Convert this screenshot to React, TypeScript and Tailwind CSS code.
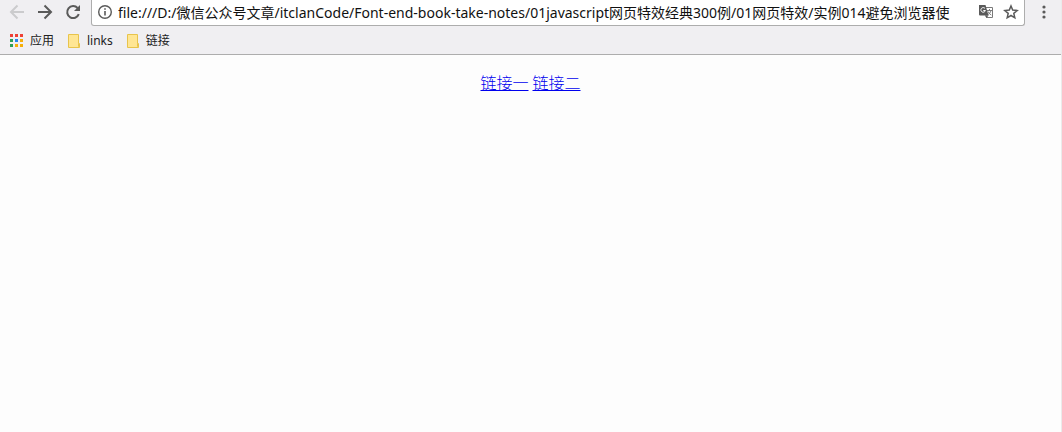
import React from "react";

const PAGE_URL =
  "file:///D:/微信公众号文章/itclanCode/Font-end-book-take-notes/01javascript网页特效经典300例/01网页特效/实例014避免浏览器使";

const BackIcon = () => (
  <svg className="size-4" viewBox="0 0 16 16" fill="none" stroke="#cbcbcd" strokeWidth="2" aria-hidden="true">
    <path d="M15 8H2.5M8.5 1.5 2 8l6.5 6.5" />
  </svg>
);

const ForwardIcon = () => (
  <svg className="size-4" viewBox="0 0 16 16" fill="none" stroke="#5a5a5a" strokeWidth="2" aria-hidden="true">
    <path d="M1 8h12.5M7.5 1.5 14 8l-6.5 6.5" />
  </svg>
);

const ReloadIcon = () => (
  <svg className="size-4" viewBox="0 0 16 16" aria-hidden="true">
    <path d="M13.8 10.2A6 6 0 1 1 12.6 4" fill="none" stroke="#5a5a5a" strokeWidth="2" />
    <path d="M15 1v6H9z" fill="#5a5a5a" />
  </svg>
);

const InfoIcon = () => (
  <svg className="size-4" viewBox="0 0 16 16" fill="none" stroke="#5a5a5a" aria-hidden="true">
    <circle cx="8" cy="8" r="6.3" strokeWidth="1.4" />
    <path d="M8 7v4.5M8 4.2v1.6" strokeWidth="1.6" />
  </svg>
);

const TranslateIcon = () => (
  <svg className="size-4" viewBox="0 0 16 16" aria-hidden="true">
    <path d="M6 3.5h8.5v10H8.5z" fill="#fff" stroke="#7a7a7a" />
    <path d="M9 6.5h5M11.5 5v1.5M13 6.5c-.5 2-1.8 3.4-3.5 4.5M10 7.5c.7 1.5 1.8 2.7 3.3 3.5" fill="none" stroke="#7a7a7a" />
    <path d="M1 1h6.5l3 10.5H2a1 1 0 0 1-1-1z" fill="#5a5a5a" />
    <path d="M7 4.5A2.3 2.3 0 1 0 7.4 6.5H5.3" fill="none" stroke="#fff" />
    <path d="M7 11.5h3.5L8.5 14z" fill="#5a5a5a" />
  </svg>
);

const StarIcon = () => (
  <svg className="size-4" viewBox="0 0 16 16" fill="none" stroke="#5a5a5a" strokeWidth="1.5" aria-hidden="true">
    <path d="m8 2 1.7 4.1 4.5.4-3.4 2.9 1 4.4L8 11.5l-3.8 2.3 1-4.4L1.8 6.5l4.5-.4z" />
  </svg>
);

const MenuIcon = () => (
  <svg className="size-4" viewBox="0 0 16 16" fill="#5a5a5a" aria-hidden="true">
    <circle cx="8" cy="3" r="1.6" />
    <circle cx="8" cy="8" r="1.6" />
    <circle cx="8" cy="13" r="1.6" />
  </svg>
);

const AppsIcon = () => (
  <svg className="size-3.5" viewBox="0 0 14 14" aria-hidden="true">
    <path d="M0 0h3v3H0zM5 0h3v3H5zM10 0h3v3h-3z" fill="#ee4035" />
    <path d="M0 5h3v3H0zM0 10h3v3H0z" fill="#2c9f58" />
    <path d="M5 5h3v3H5z" fill="#2586f0" />
    <path d="M10 5h3v3h-3zM5 10h3v3H5zM10 10h3v3h-3z" fill="#f5ae08" />
  </svg>
);

const FolderIcon = () => (
  <svg className="h-3.5 w-3" viewBox="0 0 12 14" aria-hidden="true">
    <path d="M.5.5h10v9h1v4H.5z" fill="#ffe694" stroke="#e8c44c" />
    <path d="M10.5 9.5v3l-1 1" fill="none" stroke="#e8c44c" />
  </svg>
);

function Bookmark({ label }: { label: string }) {
  return (
    <a href="#" className="flex items-center gap-[7px]">
      <FolderIcon />
      {label}
    </a>
  );
}

export default function App() {
  return (
    <div className="min-h-screen border-r border-[#ebebeb] bg-[#fdfdfd] font-['Noto_Sans','Noto_Sans_CJK_SC',sans-serif]">
      <header className="border-b border-[#adadad] bg-[#f0eff2]">
        <div className="flex h-[26px] items-start px-[9px]">
          <nav className="flex h-6 shrink-0 items-center gap-3">
            <button type="button" disabled aria-label="后退"><BackIcon /></button>
            <button type="button" aria-label="前进"><ForwardIcon /></button>
            <button type="button" aria-label="重新加载"><ReloadIcon /></button>
          </nav>
          <div className="ml-[10px] flex h-full min-w-0 flex-1 items-start rounded-b-[3px] border border-t-0 border-[#adadad] bg-white px-[5px]">
            <div className="flex h-6 min-w-0 flex-1 items-center">
              <button type="button" aria-label="网站信息"><InfoIcon /></button>
              <input
                type="text"
                aria-label="地址"
                defaultValue={PAGE_URL}
                className="ml-[5px] h-6 min-w-0 flex-1 bg-transparent text-sm text-[#111111] outline-none"
              />
              <div className="ml-1 flex shrink-0 gap-[9px]">
                <button type="button" aria-label="翻译"><TranslateIcon /></button>
                <button type="button" aria-label="收藏"><StarIcon /></button>
              </div>
            </div>
          </div>
          <button type="button" aria-label="菜单" className="ml-[11px] flex h-6 shrink-0 items-center"><MenuIcon /></button>
        </div>
        <nav className="flex h-7 items-center gap-[14px] pl-[10px] pt-0.5 text-xs text-[#222222]">
          <a href="#" className="flex items-center gap-1.5"><AppsIcon />应用</a>
          <Bookmark label="links" />
          <Bookmark label="链接" />
        </nav>
      </header>
      <main className="flex justify-center gap-1 pt-4 text-base font-light text-[#0000ee]">
        <a href="#" className="underline">链接一</a>
        <a href="#" className="underline">链接二</a>
      </main>
    </div>
  );
}
